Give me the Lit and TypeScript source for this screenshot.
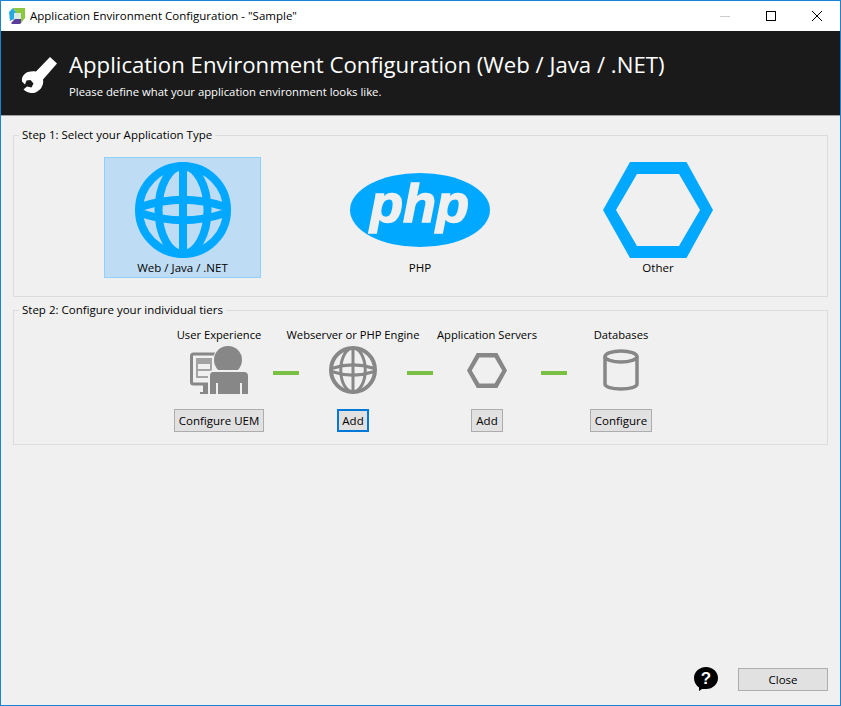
import { LitElement, html, css } from "lit";
import { customElement } from "lit/decorators.js";

// globe, drawn in a 96 box and scaled for the tier row
const globe = (size: number, color: string, inner = 8) => html`
  <svg width=${size} height=${size} viewBox="0 0 96 96" fill="none" stroke=${color} stroke-width=${inner}>
    <circle cx="48" cy="48" r="44" stroke-width="8"></circle>
    <ellipse cx="48" cy="48" rx="24.5" ry="44"></ellipse>
    <path d="M48 4V92"></path>
    <path d="M7 44.5Q48 31 89 44.5M7 51.5Q48 65 89 51.5"></path>
  </svg>
`;

const hexagon = (w: number, h: number, color: string) => html`
  <svg width=${w} height=${h} viewBox="0 0 110 96">
    <path
      fill=${color}
      fill-rule="evenodd"
      d="M0 48L27 0H83.500L110 48L83.500 96H27ZM13 48L34 84H76L97 48L76 12H34Z"
    ></path>
  </svg>
`;

@customElement("app-root")
export class AppRoot extends LitElement {
  static override styles = css`
    :host {
      display: block;
      box-sizing: border-box;
      width: 841px;
      height: 706px;
      border: 1px solid #1883d7;
      background: #f0f0f0;
      font-family: "Open Sans", "Noto Sans", sans-serif;
      font-size: 11.5px;
      color: #000;
    }
    .window {
      display: flex;
      flex-direction: column;
      height: 100%;
    }
    .titlebar {
      display: flex;
      align-items: center;
      height: 30px;
      background: #fff;
      flex: none;
    }
    .app-icon {
      margin: 0 5px 0 8px;
      flex: none;
    }
    .title {
      flex: 1;
      white-space: nowrap;
      margin-bottom: 1px;
    }
    .controls {
      display: flex;
      align-items: center;
      height: 30px;
    }
    .ctl {
      width: 46px;
      height: 30px;
      display: flex;
      align-items: center;
      justify-content: center;
    }
    .banner {
      flex: none;
      height: 85px;
      box-sizing: border-box;
      background: #1a1a1a;
      border-bottom: 1px solid #a0a0a0;
      display: flex;
      align-items: center;
      color: #fff;
    }
    .banner svg {
      margin: 3px 0 0 20px;
      flex: none;
    }
    .banner-text {
      margin-left: 12px;
      padding-top: 2px;
    }
    .banner h1 {
      margin: 0;
      font-size: 22.2px;
      font-weight: 400;
      line-height: 31px;
      white-space: nowrap;
    }
    .banner p {
      margin: 4px 0 0;
      font-size: 11.3px;
      line-height: 16px;
    }
    .content {
      flex: 1;
      padding: 11px 12px 0;
      display: flex;
      flex-direction: column;
      gap: 5px;
    }
    fieldset {
      margin: 0;
      padding: 0;
      border: 1px solid #dcdcdc;
      min-width: 0;
    }
    legend {
      margin-left: 5px;
      padding: 0 3px;
      line-height: 16px;
    }
    .types {
      display: grid;
      grid-template-columns: 237px 238px 238px;
      justify-content: start;
      padding: 14px 0 18px 50px;
    }
    .type {
      justify-self: center;
      box-sizing: border-box;
      width: 157px;
      height: 121px;
      border: 1px solid transparent;
      display: flex;
      flex-direction: column;
      align-items: center;
      padding-top: 4px;
    }
    .type.on {
      background: #bedcf3;
      border-color: #90d0fb;
    }
    .type-icon {
      height: 96px;
      display: flex;
      align-items: center;
      justify-content: center;
    }
    .type-label {
      margin-top: 2px;
      line-height: 16px;
    }
    .tiers {
      display: grid;
      grid-template-columns: 108px 26px 108px 26px 108px 26px 108px;
      justify-content: start;
      grid-template-rows: 16px 48px 34px;
      padding: 9px 0 13px 151px;
      row-gap: 3px;
    }
    .tier-label {
      justify-self: center;
      white-space: nowrap;
      font-size: 11.2px;
      line-height: 16px;
    }
    .tier-icon {
      grid-row: 2;
      display: flex;
      align-items: center;
      justify-content: center;
    }
    .link {
      grid-row: 2;
      align-self: center;
      height: 4px;
      margin-top: 5px;
      background: #7ac143;
    }
    .tier-btn {
      grid-row: 3;
      justify-self: center;
      margin-top: 12px;
    }
    button {
      box-sizing: border-box;
      height: 23px;
      min-width: 32px;
      margin: 0;
      padding: 0 4px;
      border: 1px solid #adadad;
      background: #e1e1e1;
      font: inherit;
      color: #000;
      white-space: nowrap;
    }
    button.focus {
      border: 2px solid #0078d7;
      padding: 0 3px;
    }
    .footer {
      flex: none;
      display: flex;
      align-items: center;
      justify-content: flex-end;
      gap: 20px;
      padding: 0 12px 14px;
    }
    .close {
      width: 90px;
    }
  `;

  override render() {
    return html`
      <div class="window">
        <div class="titlebar">
          <svg class="app-icon" width="16" height="16" viewBox="0 0 16 16">
            <path fill="#dbe9e4" d="M4 3H13V13H4Z"></path>
            <path fill="#8dc63f" d="M4 0H16V10L12 15V5H7Z"></path>
            <path fill="#26a9e0" d="M0 4L4 0L7 5H5V11L1 13Z"></path>
            <path fill="#5b3e9b" d="M2 15L6 11H12V15L11 16H3Z"></path>
          </svg>
          <div class="title">Application Environment Configuration - "Sample"</div>
          <div class="controls">
            <div class="ctl">
              <svg width="10" height="10"><path d="M0 5.500H10" stroke="#ccc"></path></svg>
            </div>
            <div class="ctl">
              <svg width="10" height="10"><rect x=".5" y=".5" width="9" height="9" fill="none" stroke="#000"></rect></svg>
            </div>
            <div class="ctl">
              <svg width="10" height="10"><path d="M0 0L10 10M10 0L0 10" stroke="#000"></path></svg>
            </div>
          </div>
        </div>
        <div class="banner">
          <svg width="36" height="37" viewBox="0 0 36 37">
            <path
              fill="#fff"
              fill-rule="evenodd"
              d="M29 1L36 7.500L22 23.500C23 29 20 35 13 37C9 37.500 5 36 2.500 33.500L6 30.500L10.500 31.500L12.500 27.500L9.500 24L5.500 24.500L4 28.500L1 25.500C.5 21 3 17.500 7 16C10 15 13 15 15 15.500Z"
            ></path>
          </svg>
          <div class="banner-text">
            <h1>Application Environment Configuration (Web / Java / .NET)</h1>
            <p>Please define what your application environment looks like.</p>
          </div>
        </div>
        <div class="content">
          <fieldset>
            <legend>Step 1: Select your Application Type</legend>
            <div class="types">
              <div class="type on">
                <div class="type-icon">${globe(96, "#00a8ff")}</div>
                <div class="type-label">Web / Java / .NET</div>
              </div>
              <div class="type">
                <div class="type-icon">
                  <svg width="140" height="74" viewBox="0 0 140 74">
                    <ellipse cx="70" cy="37" rx="70" ry="37" fill="#00a8ff"></ellipse>
                    <text
                      x="20"
                      y="49"
                      font-family="Liberation Sans"
                      font-weight="700"
                      font-style="italic"
                      font-size="54"
                      fill="#f0f0f0"
                      stroke="#f0f0f0"
                      stroke-width="1.500"
                    >php</text>
                  </svg>
                </div>
                <div class="type-label">PHP</div>
              </div>
              <div class="type">
                <div class="type-icon">${hexagon(110, 96, "#00a8ff")}</div>
                <div class="type-label">Other</div>
              </div>
            </div>
          </fieldset>
          <fieldset>
            <legend>Step 2: Configure your individual tiers</legend>
            <div class="tiers">
              <div class="tier-label" style="grid-column:1">User Experience</div>
              <div class="tier-label" style="grid-column:3">Webserver or PHP Engine</div>
              <div class="tier-label" style="grid-column:5">Application Servers</div>
              <div class="tier-label" style="grid-column:7">Databases</div>

              <div class="tier-icon" style="grid-column:1">
                <svg width="58" height="48" viewBox="0 0 58 48" fill="#878787">
                  <rect x="1.500" y="8" width="27" height="30" rx="2" fill="none" stroke="#878787" stroke-width="3"></rect>
                  <path fill="#a3a3a3" d="M6 12H22V32H6Z"></path>
                  <path fill="#f0f0f0" d="M8 18H20V23H8ZM8 25H20V30H8Z"></path>
                  <path d="M13 39H18V46H21V48H10V46H13Z"></path>
                  <circle cx="38" cy="14" r="15" fill="#f0f0f0"></circle>
                  <circle cx="38" cy="14" r="14"></circle>
                  <path
                    stroke="#f0f0f0"
                    stroke-width="2"
                    d="M23 25H54Q59 25 59 30V49H19V30Q19 25 23 25Z"
                  ></path>
                  <path fill="#f0f0f0" d="M26 37H28V48H26ZM50 37H52V48H50Z"></path>
                </svg>
              </div>
              <div class="link" style="grid-column:2"></div>
              <div class="tier-icon" style="grid-column:3">${globe(48, "#878787", 6)}</div>
              <div class="link" style="grid-column:4"></div>
              <div class="tier-icon" style="grid-column:5">${hexagon(40, 35, "#878787")}</div>
              <div class="link" style="grid-column:6"></div>
              <div class="tier-icon" style="grid-column:7">
                <svg width="36" height="42" viewBox="0 0 36 42" fill="none" stroke="#878787" stroke-width="3.500">
                  <ellipse cx="18" cy="7.500" rx="16" ry="5.500"></ellipse>
                  <path d="M2 7.500V35C2 38 9 40 18 40C27 40 34 38 34 35V7.500"></path>
                </svg>
              </div>

              <div class="tier-btn" style="grid-column:1"><button>Configure UEM</button></div>
              <div class="tier-btn" style="grid-column:3"><button class="focus">Add</button></div>
              <div class="tier-btn" style="grid-column:5"><button>Add</button></div>
              <div class="tier-btn" style="grid-column:7"><button>Configure</button></div>
            </div>
          </fieldset>
        </div>
        <div class="footer">
          <svg width="24" height="24" viewBox="0 0 24 24">
            <path d="M12 0C19 0 24 5 24 11C24 17 19 22 12 22H8L5 24L5 20.500C2 18.500 0 15 0 11C0 5 5 0 12 0Z"></path>
            <text
              x="12"
              y="17"
              text-anchor="middle"
              font-family="Liberation Sans"
              font-weight="700"
              font-size="17"
              fill="#fff"
            >?</text>
          </svg>
          <button class="close">Close</button>
        </div>
      </div>
    `;
  }
}
